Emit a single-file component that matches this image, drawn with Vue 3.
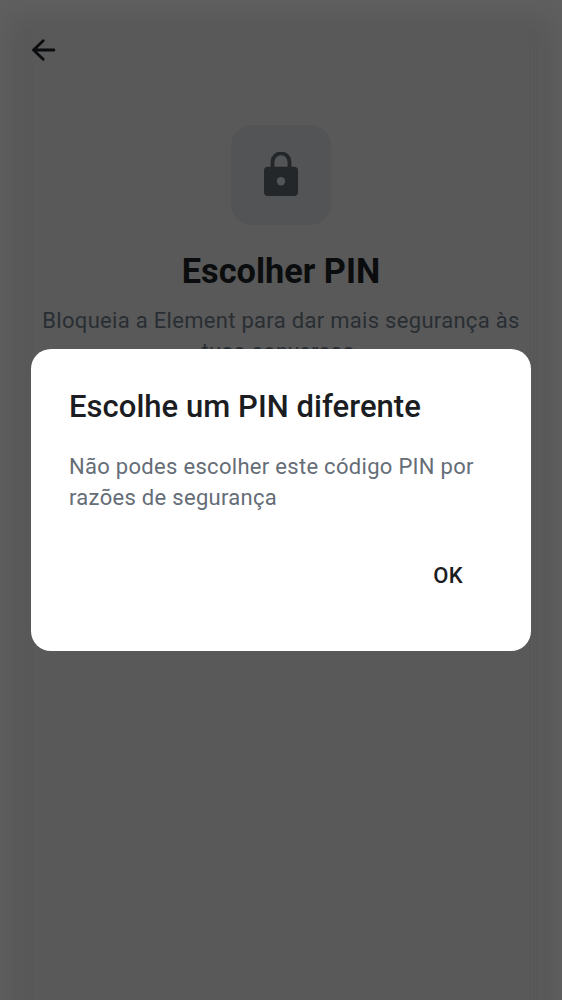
<script setup>
const lines = ['Não podes escolher este código PIN por', 'razões de segurança']
</script>

<template>
  <main class="screen">
    <div class="shade"></div>
    <header class="bar">
      <svg class="back" viewBox="0 0 24 22" aria-label="Voltar">
        <path d="M11.2 1.7 1.5 11l9.7 9.2M2.2 11h19.7" fill="none" stroke="#0b0c0e" stroke-width="2.8" stroke-linecap="round" stroke-linejoin="round" />
      </svg>
    </header>
    <section class="intro">
      <div class="tile">
        <svg class="lock" viewBox="0 0 34 46">
          <path d="M8.5 16V9.9a8.5 8.5 0 0 1 17 0V16" fill="none" stroke="#23272a" stroke-width="3.8" />
          <rect y="14.7" width="34" height="29.2" rx="4" fill="#23272a" />
          <circle cx="17" cy="29.3" r="4.2" fill="#535456" />
        </svg>
      </div>
      <h1>Escolher PIN</h1>
      <p>Bloqueia a Element para dar mais segurança às<br />tuas conversas.</p>
    </section>
    <section class="dialog" role="dialog">
      <h2>Escolhe um PIN diferente</h2>
      <p><template v-for="(line, i) in lines" :key="line"><br v-if="i" />{{ line }}</template></p>
      <button>OK</button>
    </section>
  </main>
</template>

<style scoped>
.screen { height: 1000px; overflow: hidden; position: relative; background: #595959; font-family: Roboto, sans-serif; }
.shade { position: absolute; inset: 0 0 -60px; box-shadow: inset 0 12px 28px #606060, inset 0 0 28px #606060; }
.bar { position: relative; height: 125px; box-sizing: border-box; padding: 39px 0 0 32px; }
.back { width: 24px; height: 22px; display: block; }
.intro { position: relative; text-align: center; }
.tile { width: 100px; height: 100px; margin: 0 auto; border-radius: 21px; background: #535456; display: flex; align-items: center; justify-content: center; }
.lock { width: 34px; height: 46px; }
h1 { margin: 25px 0 0; font-size: 34.3px; line-height: 42px; font-weight: 700; color: #0b0c0e; }
.intro p { margin: 13px 0 0; font-size: 22px; line-height: 31px; letter-spacing: .3px; color: #292e33; }
.dialog { position: absolute; left: 31px; top: 349px; width: 500px; height: 301.6px; box-sizing: border-box; padding: 38px 38px 37px; border-radius: 20px; background: #fff; display: flex; flex-direction: column; }
h2 { margin: 0; font-size: 31px; line-height: 40px; font-weight: 500; letter-spacing: .04px; color: #1b1d22; }
.dialog p { margin: 24px 0 0; font-size: 22px; line-height: 31px; letter-spacing: .3px; color: #656d77; }
button { align-self: flex-end; margin: 47px 30px 0 0; padding: 0; border: 0; background: none; font: 500 22px/32px Roboto, sans-serif; letter-spacing: .3px; color: #1b1d22; }
</style>

<style>
body { margin: 0; }
</style>
